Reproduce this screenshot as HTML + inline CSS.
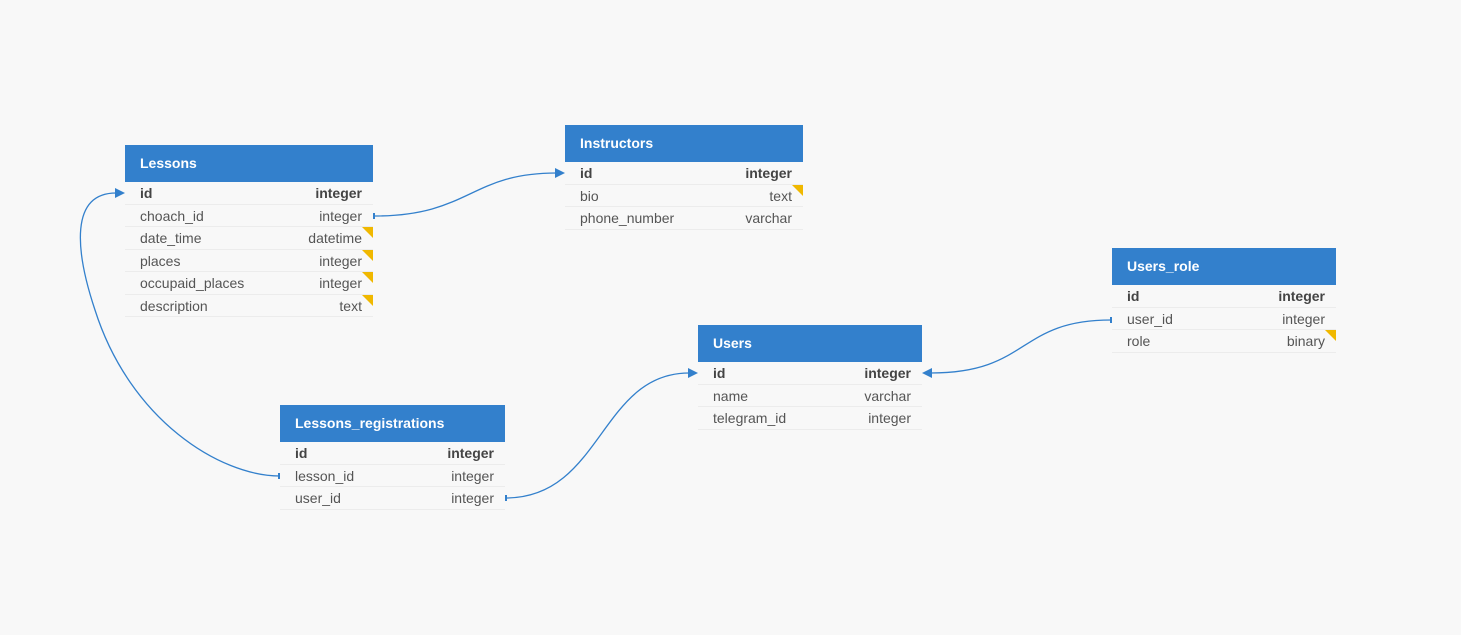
<!DOCTYPE html>
<html><head><meta charset="utf-8"><style>
body{margin:0;width:1461px;height:635px;background:#f8f8f8;font-family:"Liberation Sans",sans-serif;position:relative;overflow:hidden}
.t{position:absolute;background:#f8f8f8}
.h{height:37px;background:#3380cc;color:#fff;font-weight:bold;font-size:14px;line-height:36px;padding-left:15px}
.r{height:22.5px;line-height:22px;font-size:14px;color:#555;padding:0 11px 0 15px;display:flex;justify-content:space-between;border-bottom:1px solid #ececec;box-sizing:border-box;position:relative}
.r.b{font-weight:bold;color:#444}
.n:after{content:"";position:absolute;right:0;top:0;border-top:11px solid #f0b800;border-left:11px solid transparent}
svg{position:absolute;left:0;top:0}
</style></head><body>
<div class="t" style="left:125px;top:145px;width:248px">
<div class="h">Lessons</div>
<div class="r b"><span>id</span><span>integer</span></div>
<div class="r"><span>choach_id</span><span>integer</span></div>
<div class="r n"><span>date_time</span><span>datetime</span></div>
<div class="r n"><span>places</span><span>integer</span></div>
<div class="r n"><span>occupaid_places</span><span>integer</span></div>
<div class="r n"><span>description</span><span>text</span></div>
</div>
<div class="t" style="left:565px;top:125px;width:238px">
<div class="h">Instructors</div>
<div class="r b"><span>id</span><span>integer</span></div>
<div class="r n"><span>bio</span><span>text</span></div>
<div class="r"><span>phone_number</span><span>varchar</span></div>
</div>
<div class="t" style="left:1112px;top:248px;width:224px">
<div class="h">Users_role</div>
<div class="r b"><span>id</span><span>integer</span></div>
<div class="r"><span>user_id</span><span>integer</span></div>
<div class="r n"><span>role</span><span>binary</span></div>
</div>
<div class="t" style="left:698px;top:325px;width:224px">
<div class="h">Users</div>
<div class="r b"><span>id</span><span>integer</span></div>
<div class="r"><span>name</span><span>varchar</span></div>
<div class="r"><span>telegram_id</span><span>integer</span></div>
</div>
<div class="t" style="left:280px;top:405px;width:225px">
<div class="h">Lessons_registrations</div>
<div class="r b"><span>id</span><span>integer</span></div>
<div class="r"><span>lesson_id</span><span>integer</span></div>
<div class="r"><span>user_id</span><span>integer</span></div>
</div>
<svg width="1461" height="635" fill="none" stroke="#3380cc" stroke-width="1.3">
<path d="M374,216 C470,216 470,173 556,173"/>
<polygon points="565,173 555,168 555,178" fill="#3380cc" stroke="none"/>
<path d="M116,193 C70,193 75,250 95,310 C130,420 220,476 280,476"/>
<polygon points="125,193 115,188 115,198" fill="#3380cc" stroke="none"/>
<path d="M506,498 C602,498 600,373 689,373"/>
<polygon points="698,373 688,368 688,378" fill="#3380cc" stroke="none"/>
<path d="M1111,320 C1017,320 1030,373 931,373"/>
<polygon points="922,373 932,368 932,378" fill="#3380cc" stroke="none"/>
<path d="M374,213v6M279,473v6M506,495v6M1111,317v6" stroke-width="2"/>
</svg>
</body></html>
